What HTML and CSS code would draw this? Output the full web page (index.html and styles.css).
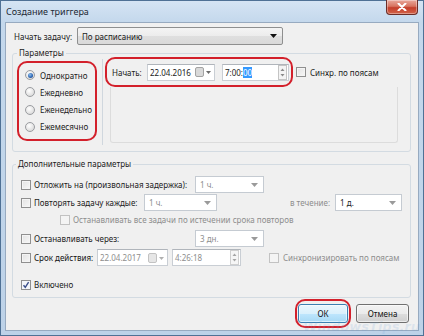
FILE: index.html
```html
<!DOCTYPE html>
<html lang="ru">
<head>
<meta charset="utf-8">
<title>Создание триггера</title>
<link rel="stylesheet" href="styles.css">
</head>
<body>
<div class="window">
  <div class="titlebar">
    <span class="title">Создание триггера</span>
    <div class="close">
      <svg width="10" height="8" viewBox="0 0 10 8"><path d="M1.5 0.5L8.5 7.5M8.5 0.5L1.5 7.5" stroke="#fff" stroke-width="2" stroke-linecap="round"/></svg>
    </div>
  </div>
  <div class="client">
    <div class="start-row">
      <span class="start-label">Начать задачу:</span>
      <div class="combo combo-main"><span class="val">По расписанию</span><svg class="arr" width="7" height="4" viewBox="0 0 7 4"><path d="M0 0h7L3.5 4z" fill="#111"/></svg></div>
    </div>

    <div class="group g1">
      <div class="legend">Параметры</div>
      <div class="g1-body">
        <div class="radios mark">
          <div class="radio checked"><span class="rb"></span><span>Однократно</span></div>
          <div class="radio"><span class="rb"></span><span>Ежедневно</span></div>
          <div class="radio"><span class="rb"></span><span>Еженедельно</span></div>
          <div class="radio"><span class="rb"></span><span>Ежемесячно</span></div>
        </div>
        <div class="vsep"></div>
        <div class="sched">
          <div class="sched-top">
            <div class="start-box mark">
              <span class="lbl-start">Начать:</span>
              <div class="field date"><span class="val">22.04.2016</span><svg class="cal" width="16" height="10" viewBox="0 0 16 10"><rect x="0.5" y="0.5" width="8" height="9" rx="1.5" fill="#d9d9d9" stroke="#a3a3a3"/><path d="M11 4h5l-2.5 3z" fill="#6b6b6b"/></svg></div>
              <div class="field time"><span class="val">7:00:<span class="sel">00</span></span><svg class="spin" width="9" height="15" viewBox="0 0 9 15"><rect x="0.5" y="0.5" width="8" height="14" fill="#f4f4f4" stroke="#c4c4c4"/><path d="M2.5 6l2-2.5 2 2.5z" fill="#8a8a8a"/><path d="M2.5 9l2 2.5 2-2.5z" fill="#8a8a8a"/></svg></div>
            </div>
            <div class="check sync"><span class="cb"></span><span>Синхр. по поясам</span></div>
          </div>
          <div class="sched-panel"></div>
        </div>
      </div>
    </div>

    <div class="group g2">
      <div class="legend">Дополнительные параметры</div>
      <div class="row r1">
        <div class="check w-delay"><span class="cb"></span><span>Отложить на (произвольная задержка):</span></div>
        <div class="combo c-delay"><span class="val gray">1 ч.</span><svg class="arr" width="7" height="4" viewBox="0 0 7 4"><path d="M0 0h7L3.5 4z" fill="#9a9a9a"/></svg></div>
      </div>
      <div class="row r2">
        <div class="check w-repeat"><span class="cb"></span><span>Повторять задачу каждые:</span></div>
        <div class="combo c-repeat"><span class="val gray">1 ч.</span><svg class="arr" width="7" height="4" viewBox="0 0 7 4"><path d="M0 0h7L3.5 4z" fill="#9a9a9a"/></svg></div>
        <span class="during disabled">в течение:</span>
        <div class="combo c-during"><span class="val">1 д.</span><svg class="arr" width="7" height="4" viewBox="0 0 7 4"><path d="M0 0h7L3.5 4z" fill="#9a9a9a"/></svg></div>
      </div>
      <div class="row r3">
        <div class="check disabled"><span class="cb"></span><span>Останавливать все задачи по истечении срока повторов</span></div>
      </div>
      <div class="row r4">
        <div class="check w-delay"><span class="cb"></span><span>Останавливать через:</span></div>
        <div class="combo c-delay"><span class="val gray">3 дн.</span><svg class="arr" width="7" height="4" viewBox="0 0 7 4"><path d="M0 0h7L3.5 4z" fill="#9a9a9a"/></svg></div>
      </div>
      <div class="row r5">
        <div class="check w-expire"><span class="cb"></span><span class="dark">Срок действия:</span></div>
        <div class="field date2"><span class="val gray">22.04.2017</span><svg class="cal" width="16" height="10" viewBox="0 0 16 10"><rect x="0.5" y="0.5" width="8" height="9" rx="1.5" fill="#e6e6e6" stroke="#c2c2c2"/><path d="M11 4h5l-2.5 3z" fill="#b0b0b0"/></svg></div>
        <div class="field time2"><span class="val gray">4:26:18</span><svg class="spin" width="9" height="15" viewBox="0 0 9 15"><rect x="0.5" y="0.5" width="8" height="14" fill="#f6f6f6" stroke="#d0d0d0"/><path d="M2.5 6l2-2.5 2 2.5z" fill="#a5a5a5"/><path d="M2.5 9l2 2.5 2-2.5z" fill="#a5a5a5"/></svg></div>
        <div class="check disabled sync2"><span class="cb"></span><span>Синхронизировать по поясам</span></div>
      </div>
      <div class="row r6">
        <div class="check"><span class="cb checked"><svg width="8" height="8" viewBox="0 0 8 8"><path d="M1.5 4.2L3.3 6.3L6.6 1.2" stroke="#3b4f8a" stroke-width="1.4" fill="none"/></svg></span><span>Включено</span></div>
      </div>
    </div>

    <div class="buttons">
      <div class="ok-mark mark"><button class="btn ok">ОК</button></div>
      <button class="btn cancel">Отмена</button>
    </div>
  </div>
  <div class="watermark">WindowsTips.ru</div>
</div>
</body>
</html>
```
FILE: styles.css
```css
* { box-sizing: border-box; }
html, body { margin: 0; padding: 0; }
body {
  width: 424px; height: 336px; overflow: hidden;
  font-family: "Noto Sans", "Open Sans", sans-serif;
  font-size: 8px;
  color: #1b1b1b;
  background: #6f90b2;
}
.window {
  position: relative;
  width: 424px; height: 336px;
  display: flex; flex-direction: column;
  padding: 0 5px 5px 5px;
  background: linear-gradient(to bottom, #d6e5f4 0px, #c4d8ec 22px, #bdd2e8 100%);
  box-shadow: inset 0 0 0 1px #4f7195;
}
.titlebar {
  height: 22px; flex: none;
  display: flex; align-items: flex-start;
}
.title {
  margin-left: 1px; margin-top: 5px;
  font-size: 9px; color: #1e2a36;
}
.close {
  margin-left: auto; margin-right: 1px;
  width: 32px; height: 15px;
  display: flex; align-items: center; justify-content: center;
  border: 1px solid #6b2d27; border-top: none;
  border-radius: 0 0 4px 4px;
  background: linear-gradient(to bottom, #e9a99c 0%, #d7735f 45%, #c43e2a 55%, #d2644a 100%);
  box-shadow: inset 0 0 0 1px rgba(255,255,255,0.35);
}
.client {
  flex: 1;
  display: flex; flex-direction: column;
  background: #f0f0f0;
  border: 1px solid #97aac0;
}
.start-row {
  display: flex; align-items: center;
  margin-top: 4px; height: 18px;
  padding-left: 8px;
}
.start-label { width: 63px; }
.combo {
  display: flex; align-items: center; justify-content: space-between;
  height: 17px; padding: 0 5px 0 4px;
  background: #fff;
  border: 1px solid #c5cbd2;
}
.combo-main {
  width: 206px; height: 18px;
  border: 1px solid #8e8f8f; border-radius: 2px;
  background: linear-gradient(to bottom, #f4f4f4 0%, #ececec 50%, #dfdfdf 51%, #d9d9d9 100%);
}
.gray { color: #8e8e8e; }
.dark { color: #111; }

.group {
  display: flex; flex-direction: column;
  border: 1px solid #d3dbe2; border-radius: 3px;
  margin-left: 6px; margin-right: 7px;
}
.legend {
  align-self: flex-start;
  height: 12px; line-height: 12px;
  margin-top: -7px; margin-left: 4px;
  padding: 0 2px;
  background: #f0f0f0;
}
.g1 { margin-top: 8px; height: 99px; }
.g1-body { display: flex; margin-top: -2px; }
.mark {
  border: 2px solid #d3202b; border-radius: 10px;
}
.radios {
  margin-left: 4px; margin-top: 4px;
  width: 80px; height: 80px;
  display: flex; flex-direction: column; justify-content: center;
  padding-left: 6px; gap: 5px;
}
.radio { display: flex; align-items: center; height: 12.3px; }
.rb {
  width: 10px; height: 10px; border-radius: 50%;
  border: 1px solid #9a9ca0;
  background: radial-gradient(circle at 40% 35%, #ffffff 0%, #e3e3e3 60%, #cfcfcf 100%);
  margin-right: 5px; flex: none;
  display: flex; align-items: center; justify-content: center;
}
.radio.checked .rb::after {
  content: ""; width: 5px; height: 5px; border-radius: 50%;
  background: radial-gradient(circle at 40% 35%, #8fc0ee 0%, #2b63b0 60%, #1a3f7c 100%);
}
.vsep {
  margin-left: 5px; margin-top: 2px;
  width: 1px; height: 86px;
  background: #d0d7de;
}
.sched { display: flex; flex-direction: column; margin-left: 2px; }
.sched-top { display: flex; align-items: center; }
.start-box {
  width: 188px; height: 30px;
  display: flex; align-items: center;
  padding-left: 5px;
}
.lbl-start { width: 35px; }
.field {
  display: flex; align-items: center; justify-content: space-between;
  height: 17px; padding: 0 1px 0 2px;
  background: #fff;
  border: 1px solid #c9ced4; border-top-color: #b0b5bb;
}
.date { width: 68px; padding-right: 3px; }
.time { width: 67px; margin-left: 7px; }
.sel { background: #3399ff; color: #fff; }
.check { display: flex; align-items: center; }
.cb {
  width: 10px; height: 10px; flex: none;
  border: 1px solid #8f8f8f;
  background: linear-gradient(135deg, #e2e2e2 0%, #f7f7f7 100%);
  box-shadow: inset 0 0 0 1px #f4f4f4;
  margin-right: 3px;
  display: flex; align-items: center; justify-content: center;
}
.cb.checked { background: #f4f6fa; box-shadow: none; }
.sync { margin-left: 3px; }
.sync .cb { margin-right: 4px; }
.sched-panel {
  margin-left: 5px;
  width: 288px; height: 56px;
  border: 1px solid #dcdcdc; border-top: none;
  border-radius: 0 0 3px 3px;
}

.g2 { margin-top: 12px; height: 134px; }
.g2 .legend { margin-left: 3px; }
.row { display: flex; align-items: center; height: 17px; padding-left: 8px; }
.r1 { margin-top: 6px; }
.r2 { margin-top: 1px; }
.r4 { margin-top: 2px; }
.r5 { margin-top: 2px; }
.r6 { margin-top: 10px; }
.w-delay { width: 174px; }
.w-repeat { width: 123px; }
.w-expire { width: 76px; }
.c-delay { width: 69px; }
.c-repeat { width: 73px; }
.c-during { width: 67px; }
.during { width: 45px; margin-left: 73px; }
.disabled { color: #8d8d8d; }
.disabled .cb { border-color: #c2c2c2; background: #f4f4f4; box-shadow: none; }
.r3 .check { margin-left: 39px; }
.date2 { width: 71px; padding-right: 3px; }
.time2 { width: 69px; margin-left: 4px; }
.sync2 { margin-left: 28px; }
.sync2 .cb { margin-right: 4px; }

.buttons {
  display: flex; justify-content: flex-end; align-items: center;
  margin-top: 1px; padding-right: 9px;
}
.ok-mark {
  width: 56px; height: 29px;
  display: flex; align-items: center; justify-content: center;
}
.btn {
  font: inherit; color: #111;
  height: 19px; padding: 0;
  border: 1px solid #707070; border-radius: 3px;
  background: linear-gradient(to bottom, #f2f2f2 0%, #ebebeb 50%, #dddddd 51%, #cfcfcf 100%);
  box-shadow: inset 0 0 0 1px rgba(255,255,255,0.6);
}
.ok { width: 50px; border-color: #3c7fb1; background: linear-gradient(to bottom, #eaf6fd 0%, #d9f0fc 50%, #bee6fd 51%, #a7d9f5 100%); }
.cancel { width: 53px; margin-left: 5px; }
.watermark {
  position: absolute; right: 4px; bottom: 1px;
  height: 16px; line-height: 16px;
  font-family: "DejaVu Sans", sans-serif; font-size: 13px; font-weight: bold; font-style: italic;
  color: rgba(110, 160, 215, 0.16);
  pointer-events: none;
}
```
